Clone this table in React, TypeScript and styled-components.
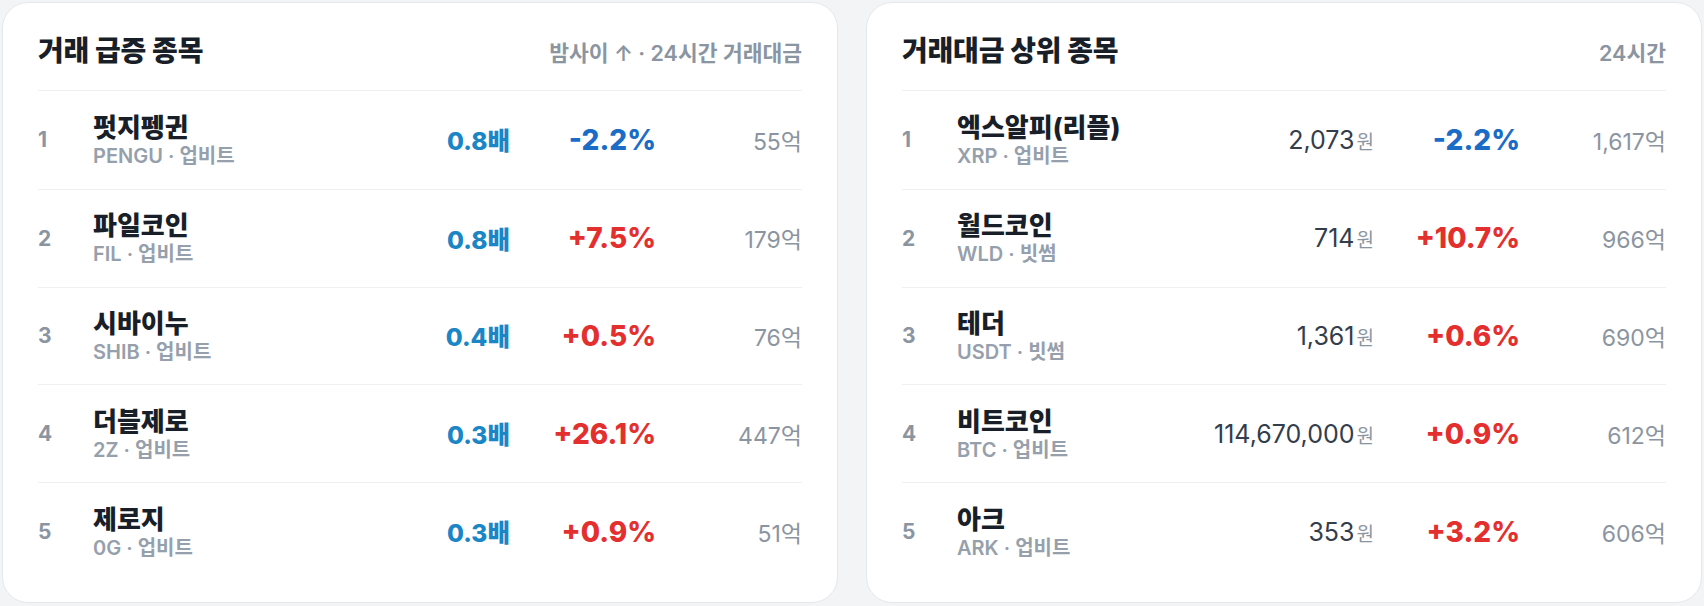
import React from "react";
import styled, { createGlobalStyle } from "styled-components";

const GlobalStyle = createGlobalStyle`
  html, body { margin: 0; padding: 0; background: #f2f4f6; }
  body { font-family: "Inter", "Noto Sans CJK KR", sans-serif; }
  * { box-sizing: border-box; }
`;

const Page = styled.div`
  display: grid;
  grid-template-columns: 1fr 1fr;
  gap: 28px;
  padding: 2px;
  width: 1704px;
  height: 606px;
`;

const Card = styled.section`
  background: #ffffff;
  border: 1px solid #e5e8eb;
  border-radius: 26px;
  padding: 31px 35px 22px 35px;
  display: flex;
  flex-direction: column;
  height: 601px;
`;

const Header = styled.div`
  display: flex;
  align-items: center;
  justify-content: space-between;
  padding-bottom: 22px;
  border-bottom: 1px solid #eef0f3;
`;

const Title = styled.h2`
  margin: 0;
  font-size: 28px;
  line-height: 34px;
  font-weight: 800;
  color: #191f28;
  letter-spacing: -0.2px;
`;

const Caption = styled.span`
  font-size: 21.5px;
  font-weight: 600;
  color: #8b95a1;
`;

const Row = styled.div`
  display: grid;
  grid-template-columns: 55px 1fr 200px 146px 146px;
  align-items: center;
  height: 98px;
  & + & { border-top: 1px solid #eef0f3; }
`;

const Rank = styled.span`
  font-size: 21px;
  font-weight: 700;
  color: #8b95a1;
`;

const NameBox = styled.div`
  display: flex;
  flex-direction: column;
`;

const Name = styled.span`
  font-size: 26px;
  line-height: 32px;
  font-weight: 800;
  color: #191f28;
`;

const Sub = styled.span`
  font-size: 20px;
  line-height: 24px;
  font-weight: 600;
  color: #96a0ac;
`;

const Ratio = styled.span`
  text-align: right;
  font-size: 24.5px;
  font-weight: 800;
  color: #1b86c6;
`;

const Price = styled.span`
  text-align: right;
  white-space: nowrap;
  font-size: 25px;
  font-weight: 400;
  color: #333d4b;
`;

const Won = styled.small`
  font-size: 19px;
  color: #8b95a1;
  margin-left: 2px;
`;

const Change = styled.span<{ $up: boolean }>`
  text-align: right;
  font-size: 28px;
  font-weight: 800;
  color: ${(p) => (p.$up ? "#e3302f" : "#1a6cc7")};
`;

const Volume = styled.span`
  text-align: right;
  font-size: 23px;
  font-weight: 400;
  color: #8b95a1;
`;

type Surge = { name: string; sym: string; ex: string; ratio: string; chg: string; vol: string };
type Top = { name: string; sym: string; ex: string; price: string; chg: string; vol: string };

const surges: Surge[] = [
  { name: "펏지펭귄", sym: "PENGU", ex: "업비트", ratio: "0.8배", chg: "-2.2%", vol: "55억" },
  { name: "파일코인", sym: "FIL", ex: "업비트", ratio: "0.8배", chg: "+7.5%", vol: "179억" },
  { name: "시바이누", sym: "SHIB", ex: "업비트", ratio: "0.4배", chg: "+0.5%", vol: "76억" },
  { name: "더블제로", sym: "2Z", ex: "업비트", ratio: "0.3배", chg: "+26.1%", vol: "447억" },
  { name: "제로지", sym: "0G", ex: "업비트", ratio: "0.3배", chg: "+0.9%", vol: "51억" },
];

const tops: Top[] = [
  { name: "엑스알피(리플)", sym: "XRP", ex: "업비트", price: "2,073", chg: "-2.2%", vol: "1,617억" },
  { name: "월드코인", sym: "WLD", ex: "빗썸", price: "714", chg: "+10.7%", vol: "966억" },
  { name: "테더", sym: "USDT", ex: "빗썸", price: "1,361", chg: "+0.6%", vol: "690억" },
  { name: "비트코인", sym: "BTC", ex: "업비트", price: "114,670,000", chg: "+0.9%", vol: "612억" },
  { name: "아크", sym: "ARK", ex: "업비트", price: "353", chg: "+3.2%", vol: "606억" },
];

export default function App() {
  return (
    <>
      <GlobalStyle />
      <Page>
        <Card>
          <Header>
            <Title>거래 급증 종목</Title>
            <Caption>밤사이 ↑ · 24시간 거래대금</Caption>
          </Header>
          {surges.map((s, i) => (
            <Row key={s.sym}>
              <Rank>{i + 1}</Rank>
              <NameBox>
                <Name>{s.name}</Name>
                <Sub>{s.sym} · {s.ex}</Sub>
              </NameBox>
              <Ratio>{s.ratio}</Ratio>
              <Change $up={s.chg.startsWith("+")}>{s.chg}</Change>
              <Volume>{s.vol}</Volume>
            </Row>
          ))}
        </Card>
        <Card>
          <Header>
            <Title>거래대금 상위 종목</Title>
            <Caption>24시간</Caption>
          </Header>
          {tops.map((t, i) => (
            <Row key={t.sym}>
              <Rank>{i + 1}</Rank>
              <NameBox>
                <Name>{t.name}</Name>
                <Sub>{t.sym} · {t.ex}</Sub>
              </NameBox>
              <Price>
                {t.price}
                <Won>원</Won>
              </Price>
              <Change $up={t.chg.startsWith("+")}>{t.chg}</Change>
              <Volume>{t.vol}</Volume>
            </Row>
          ))}
        </Card>
      </Page>
    </>
  );
}
